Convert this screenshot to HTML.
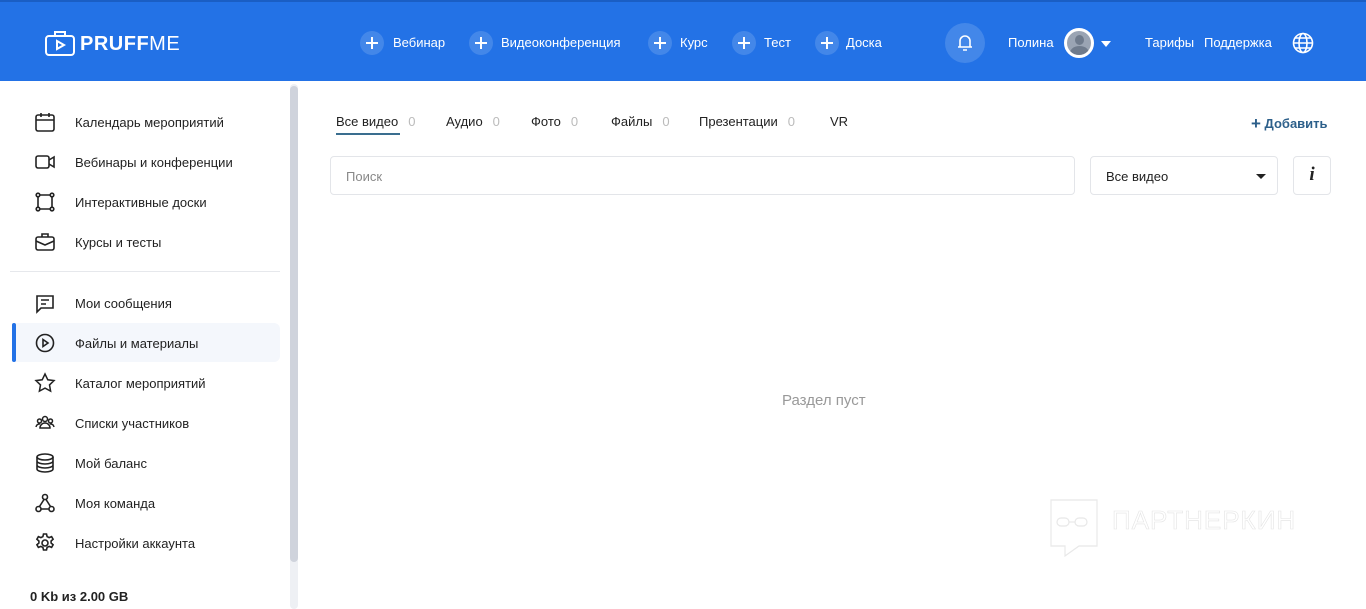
<!DOCTYPE html>
<html><head><meta charset="utf-8"><style>
*{margin:0;padding:0;box-sizing:border-box}
body{width:1366px;height:609px;overflow:hidden;background:#fff;font-family:"Liberation Sans",sans-serif;position:relative;color:#222}
.hdr{position:absolute;left:0;top:0;width:1366px;height:81px;background:#2372e6;border-top:2px solid #1a5ec4}
.a{position:absolute;white-space:nowrap}
.hw{color:#fff;font-size:13px}
.pl{position:absolute;width:24px;height:24px;border-radius:50%;background:rgba(255,255,255,.15)}
.pl:before{content:"";position:absolute;left:6px;top:11px;width:12px;height:2px;background:#fff}
.pl:after{content:"";position:absolute;left:11px;top:6px;width:2px;height:12px;background:#fff}
.nav{font-size:13px;color:#222}
.ic{position:absolute;left:34px;width:22px;height:22px}
.tab{font-size:13px;color:#222;top:114px}
.z{color:#bbb;margin-left:10px}
</style></head><body>
<div class="hdr">
<svg class="a" style="left:44px;top:28px" width="32" height="28" viewBox="0 0 32 28" fill="none" stroke="#fff" stroke-width="2"><rect x="2" y="6" width="28" height="19" rx="3"/><path d="M11 6V2h10v4"/><path d="M13 11l7 4-7 4z"/></svg>
<div class="a hw" style="left:80px;top:31px;font-size:20px;font-weight:bold;letter-spacing:.5px">PRUFF<span style="font-weight:normal">ME</span></div>
<div class="pl" style="left:360px;top:29px"></div><div class="a hw" style="left:393px;top:33px">Вебинар</div>
<div class="pl" style="left:469px;top:29px"></div><div class="a hw" style="left:501px;top:33px">Видеоконференция</div>
<div class="pl" style="left:648px;top:29px"></div><div class="a hw" style="left:680px;top:33px">Курс</div>
<div class="pl" style="left:732px;top:29px"></div><div class="a hw" style="left:764px;top:33px">Тест</div>
<div class="pl" style="left:815px;top:29px"></div><div class="a hw" style="left:846px;top:33px">Доска</div>
<div class="a" style="left:945px;top:21px;width:40px;height:40px;border-radius:50%;background:rgba(255,255,255,.15)"></div>
<svg class="a" style="left:956px;top:31px" width="18" height="20" viewBox="0 0 18 20" fill="none" stroke="#fff" stroke-width="1.6"><path d="M4 14V8a5 5 0 0 1 10 0v6H4zM2 14h14M7 17h4"/></svg>
<div class="a hw" style="left:1008px;top:33px">Полина</div>
<div class="a" style="left:1064px;top:26px;width:30px;height:30px;border-radius:50%;background:#9aa4b3;border:3px solid #fff;overflow:hidden"><div style="position:absolute;left:8px;top:4px;width:9px;height:10px;border-radius:50%;background:#6f7b8c"></div><div style="position:absolute;left:3px;top:15px;width:19px;height:14px;border-radius:50% 50% 0 0;background:#6f7b8c"></div></div>
<div class="a" style="left:1101px;top:39px;border:5px solid transparent;border-top:6px solid #fff;border-bottom:0"></div>
<div class="a hw" style="left:1145px;top:33px">Тарифы</div>
<div class="a hw" style="left:1204px;top:33px">Поддержка</div>
<svg class="a" style="left:1292px;top:30px" width="22" height="22" viewBox="0 0 22 22" fill="none" stroke="#fff" stroke-width="1.6"><circle cx="11" cy="11" r="9.5"/><ellipse cx="11" cy="11" rx="4" ry="9.5"/><path d="M1.5 11h19M3 6h16M3 16h16"/></svg>
</div>
<div class="a" style="left:290px;top:84px;width:8px;height:525px;background:#eef0f4;border-radius:4px"></div>
<div class="a" style="left:290px;top:86px;width:8px;height:476px;background:#cfd3dc;border-radius:4px"></div>
<div class="a" style="left:10px;top:271px;width:270px;height:1px;background:#e6e8ec"></div>
<div class="a" style="left:12px;top:323px;width:268px;height:39px;background:#f4f7fc;border-radius:6px"></div>
<div class="a" style="left:12px;top:323px;width:4px;height:39px;background:#2372e6;border-radius:2px"></div>
<svg class="ic" style="top:111px" viewBox="0 0 22 22" fill="none" stroke="#222" stroke-width="1.6"><rect x="2" y="4" width="18" height="16" rx="2"/><path d="M2 9h18M7 2v4M15 2v4"/></svg>
<div class="a nav" style="left:75px;top:115px">Календарь мероприятий</div>
<svg class="ic" style="top:151px" viewBox="0 0 22 22" fill="none" stroke="#222" stroke-width="1.6"><rect x="2" y="5" width="13" height="12" rx="2"/><path d="M15 9l5-3v10l-5-3"/></svg>
<div class="a nav" style="left:75px;top:155px">Вебинары и конференции</div>
<svg class="ic" style="top:191px" viewBox="0 0 22 22" fill="none" stroke="#222" stroke-width="1.6"><path d="M4 6v10M18 6v10M6 4h10M6 18h10"/><circle cx="4" cy="4" r="1.8"/><circle cx="18" cy="4" r="1.8"/><circle cx="4" cy="18" r="1.8"/><circle cx="18" cy="18" r="1.8"/></svg>
<div class="a nav" style="left:75px;top:195px">Интерактивные доски</div>
<svg class="ic" style="top:231px" viewBox="0 0 22 22" fill="none" stroke="#222" stroke-width="1.6"><rect x="2" y="6" width="18" height="13" rx="2"/><path d="M8 6V3h6v3M2 10l9 4 9-4"/></svg>
<div class="a nav" style="left:75px;top:235px">Курсы и тесты</div>
<svg class="ic" style="top:292px" viewBox="0 0 22 22" fill="none" stroke="#222" stroke-width="1.6"><path d="M3 4h16v12H7l-4 4z"/><path d="M7 8h8M7 12h5"/></svg>
<div class="a nav" style="left:75px;top:296px">Мои сообщения</div>
<svg class="ic" style="top:332px" viewBox="0 0 22 22" fill="none" stroke="#222" stroke-width="1.6"><circle cx="11" cy="11" r="8.5"/><path d="M9 7.5l5 3.5-5 3.5z"/></svg>
<div class="a nav" style="left:75px;top:336px">Файлы и материалы</div>
<svg class="ic" style="top:372px" viewBox="0 0 22 22" fill="none" stroke="#222" stroke-width="1.5"><path d="M11 2l2.8 5.8 6.2.8-4.5 4.3 1.1 6.2L11 16.1 5.4 19.1l1.1-6.2L2 8.6l6.2-.8z"/></svg>
<div class="a nav" style="left:75px;top:376px">Каталог мероприятий</div>
<svg class="ic" style="top:412px" viewBox="0 0 22 22" fill="none" stroke="#222" stroke-width="1.5"><circle cx="11" cy="7" r="2.5"/><circle cx="5.5" cy="9" r="2"/><circle cx="16.5" cy="9" r="2"/><path d="M6 16a5 5 0 0 1 10 0zM2 15a3.5 3.5 0 0 1 4-3M20 15a3.5 3.5 0 0 0-4-3"/></svg>
<div class="a nav" style="left:75px;top:416px">Списки участников</div>
<svg class="ic" style="top:452px" viewBox="0 0 22 22" fill="none" stroke="#222" stroke-width="1.6"><ellipse cx="11" cy="5" rx="8" ry="3"/><path d="M3 5v12c0 1.7 3.6 3 8 3s8-1.3 8-3V5M3 9c0 1.7 3.6 3 8 3s8-1.3 8-3M3 13c0 1.7 3.6 3 8 3s8-1.3 8-3"/></svg>
<div class="a nav" style="left:75px;top:456px">Мой баланс</div>
<svg class="ic" style="top:492px" viewBox="0 0 22 22" fill="none" stroke="#222" stroke-width="1.6"><circle cx="11" cy="5" r="2.5"/><circle cx="4.5" cy="17" r="2.5"/><circle cx="17.5" cy="17" r="2.5"/><path d="M10 7.5l-4.5 7M12 7.5l4.5 7M7 17h8"/></svg>
<div class="a nav" style="left:75px;top:496px">Моя команда</div>
<svg class="ic" style="top:532px" viewBox="0 0 22 22" fill="none" stroke="#222" stroke-width="1.6"><circle cx="11" cy="11" r="3"/><path d="M9.5 2h3l.6 2.6 2 1 2.5-1 1.5 2.6-2 1.8v2l2 1.8-1.5 2.6-2.5-1-2 1-.6 2.6h-3l-.6-2.6-2-1-2.5 1-1.5-2.6 2-1.8v-2l-2-1.8 1.5-2.6 2.5 1 2-1z"/></svg>
<div class="a nav" style="left:75px;top:536px">Настройки аккаунта</div>
<div class="a" style="left:30px;top:589px;font-size:13px;font-weight:bold;color:#222">0 Kb из 2.00 GB</div>
<div class="a tab" style="left:336px">Все видео<span class="z">0</span></div>
<div class="a" style="left:336px;top:133px;width:64px;height:2px;background:#3a6e8f"></div>
<div class="a tab" style="left:446px">Аудио<span class="z">0</span></div>
<div class="a tab" style="left:531px">Фото<span class="z">0</span></div>
<div class="a tab" style="left:611px">Файлы<span class="z">0</span></div>
<div class="a tab" style="left:699px">Презентации<span class="z">0</span></div>
<div class="a tab" style="left:830px">VR</div>
<div class="a" style="left:1251px;top:113px;font-size:13px;font-weight:bold;color:#2c5f8a"><span style="font-size:17px;position:relative;top:1px">+</span> Добавить</div>
<div class="a" style="left:330px;top:156px;width:745px;height:39px;border:1px solid #e3e5e9;border-radius:4px;font-size:13px;color:#888;padding:12px 0 0 15px">Поиск</div>
<div class="a" style="left:1090px;top:156px;width:188px;height:39px;border:1px solid #e3e5e9;border-radius:4px;font-size:13px;color:#222;padding:12px 0 0 15px">Все видео</div>
<div class="a" style="left:1256px;top:174px;border:5px solid transparent;border-top:5px solid #222;border-bottom:0"></div>
<div class="a" style="left:1293px;top:156px;width:38px;height:39px;border:1px solid #e3e5e9;border-radius:4px;font-family:'Liberation Serif',serif;font-style:italic;font-weight:bold;font-size:19px;text-align:center;padding-top:7px">i</div>
<div class="a" style="left:782px;top:392px;font-size:15px;color:#999">Раздел пуст</div>
<svg class="a" style="left:1045px;top:498px" width="60" height="60" viewBox="0 0 60 60" fill="none" stroke="#e8e8e8" stroke-width="1.2"><path d="M6 2h46v46H34l-14 10v-10H6z"/><rect x="12" y="20" width="12" height="8" rx="4"/><rect x="30" y="20" width="12" height="8" rx="4"/><path d="M24 24h6"/></svg>
<div class="a" style="left:1112px;top:505px;font-size:26px;color:#fff;-webkit-text-stroke:0.6px #e4e4e4;letter-spacing:1px">ПАРТНЕРКИН</div>
</body></html>
